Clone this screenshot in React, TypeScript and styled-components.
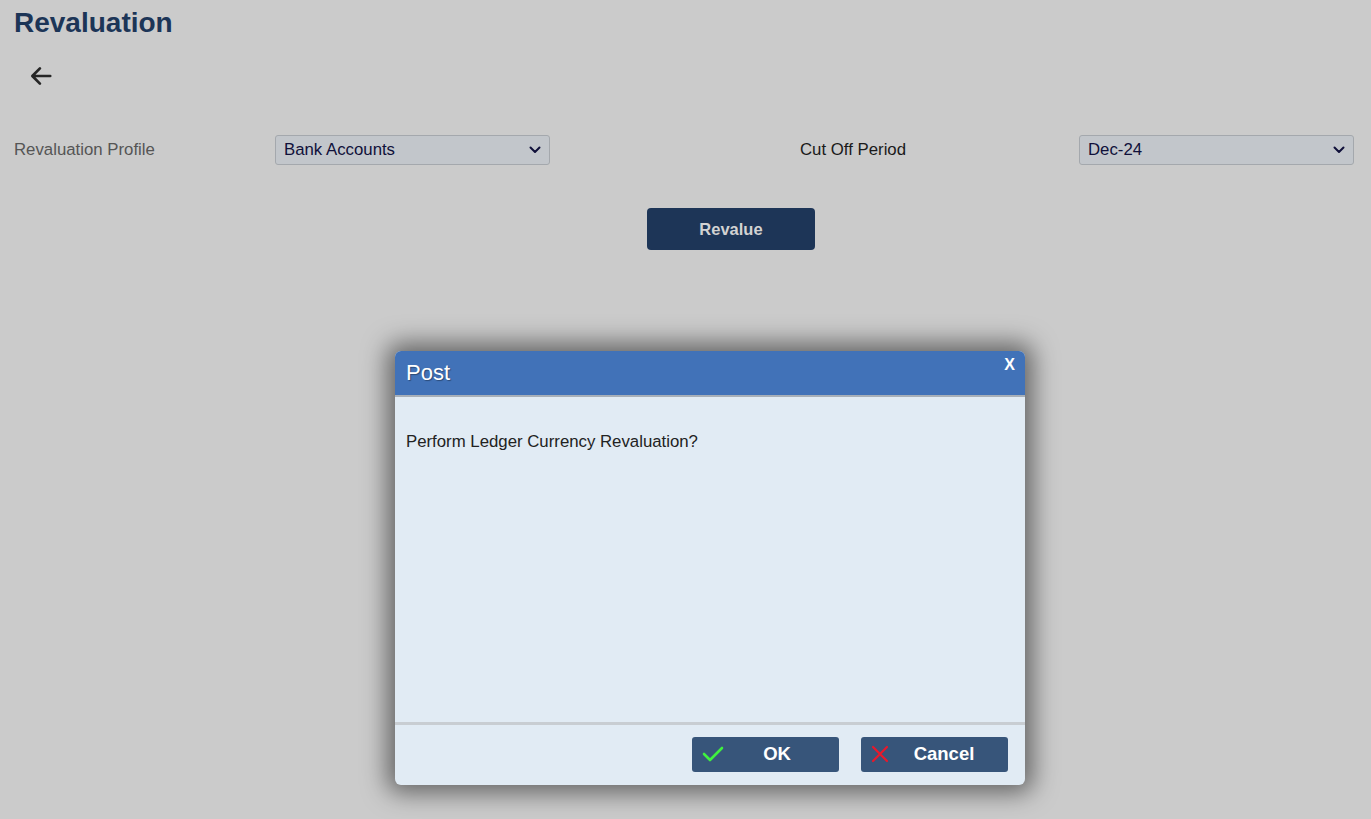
import React from "react";
import styled, { createGlobalStyle } from "styled-components";

const GlobalStyle = createGlobalStyle`
  html, body {
    margin: 0;
    padding: 0;
    background: #cbcbcb;
    font-family: "Liberation Sans", Arial, sans-serif;
  }
`;

const Page = styled.div`
  position: relative;
  width: 1371px;
  height: 819px;
  padding: 0 17px 0 14px;
  box-sizing: border-box;
  background: #cbcbcb;
  overflow: hidden;
`;

const Title = styled.h1`
  margin: 0;
  padding-top: 6px;
  font-size: 28px;
  line-height: 34px;
  font-weight: 700;
  color: #1c3557;
`;

const BackButton = styled.button`
  display: flex;
  align-items: center;
  justify-content: center;
  margin: 22px 0 0 13px;
  width: 28px;
  height: 28px;
  padding: 0;
  border: none;
  background: transparent;
  color: #262626;
  cursor: pointer;
`;

const FormRow = styled.div`
  display: grid;
  grid-template-columns: 261px 275px 1fr 275px;
  align-items: center;
  margin-top: 45px;
`;

const Label = styled.label<{ $indent?: number; $dark?: boolean }>`
  font-size: 16.8px;
  color: ${(p) => (p.$dark ? "#1a1a1a" : "#555555")};
  padding-left: ${(p) => p.$indent ?? 0}px;
`;

const SelectBox = styled.div`
  display: flex;
  align-items: center;
  justify-content: space-between;
  height: 30px;
  box-sizing: border-box;
  padding: 0 8px 1px 8px;
  background: #c2c6cb;
  border: 1px solid #a4a8ad;
  border-radius: 3px;
  font-size: 16.8px;
  color: #10103a;
`;

const ActionRow = styled.div`
  display: flex;
  margin-top: 43px;
  padding-left: 633px;
`;

const PrimaryButton = styled.button`
  width: 168px;
  height: 42px;
  border: none;
  border-radius: 4px;
  background: #1d3557;
  color: #d2d2d2;
  font-family: inherit;
  font-size: 16.5px;
  font-weight: 700;
  cursor: pointer;
`;

const Dialog = styled.div`
  position: absolute;
  left: 395px;
  top: 351px;
  width: 630px;
  height: 434px;
  display: flex;
  flex-direction: column;
  background: #e1ebf4;
  border-radius: 6px;
  overflow: hidden;
  box-shadow: 0 0 24px 8px rgba(0, 0, 0, 0.5);
`;

const DialogHeader = styled.div`
  position: relative;
  height: 46px;
  flex: none;
  display: flex;
  align-items: center;
  padding: 0 11px;
  background: #4172b8;
  border-bottom: 2px solid #a7afb8;
  box-sizing: border-box;
`;

const DialogTitle = styled.span`
  font-size: 22px;
  color: #ffffff;
  text-shadow: 1px 1px 1px rgba(0, 0, 0, 0.35);
`;

const CloseButton = styled.button`
  position: absolute;
  top: 5px;
  right: 10px;
  padding: 0;
  border: none;
  background: transparent;
  color: #ffffff;
  font-family: inherit;
  font-size: 16px;
  font-weight: 700;
  cursor: pointer;
`;

const DialogBody = styled.div`
  flex: 1;
  padding: 35px 11px 0;
  font-size: 16.8px;
  color: #222222;
`;

const DialogFooter = styled.div`
  flex: none;
  height: 63px;
  display: flex;
  align-items: center;
  justify-content: flex-end;
  gap: 22px;
  padding: 0 17px 2px 0;
  box-sizing: border-box;
  border-top: 3px solid #c8cdd2;
`;

const FooterButton = styled.button`
  position: relative;
  width: 147px;
  height: 35px;
  display: flex;
  align-items: center;
  padding: 0 0 0 10px;
  border: none;
  border-radius: 3px;
  background: #37557a;
  color: #ffffff;
  font-family: inherit;
  font-size: 18.5px;
  font-weight: 700;
  cursor: pointer;
`;

const ButtonText = styled.span`
  flex: 1;
  text-align: center;
  padding-right: 9px;
`;

const Chevron = () => (
  <svg width="12" height="8" viewBox="0 0 12 8" fill="none">
    <path d="M1.5 1.5 6 6l4.5-4.5" stroke="#10103a" strokeWidth="2" strokeLinecap="round" strokeLinejoin="round" />
  </svg>
);

const ArrowLeft = () => (
  <svg width="26" height="26" viewBox="0 0 24 24" fill="none">
    <path d="M20.5 12H4.5M11 5l-7 7 7 7" stroke="currentColor" strokeWidth="2.5" strokeLinecap="round" strokeLinejoin="round" />
  </svg>
);

const CheckIcon = () => (
  <svg width="22" height="18" viewBox="0 0 22 18" fill="none">
    <path d="M2 9l6 6L20 3" stroke="#3ff03f" strokeWidth="2.6" strokeLinecap="round" strokeLinejoin="round" />
  </svg>
);

const CrossIcon = () => (
  <svg width="18" height="18" viewBox="0 0 18 18" fill="none">
    <path d="M2 2l14 14M16 2 2 16" stroke="#e8192b" strokeWidth="2.2" strokeLinecap="round" />
  </svg>
);

const App = () => {
  return (
    <>
      <GlobalStyle />
      <Page>
        <Title>Revaluation</Title>
        <BackButton aria-label="Back">
          <ArrowLeft />
        </BackButton>

        <FormRow>
          <Label>Revaluation Profile</Label>
          <SelectBox>
            <span>Bank Accounts</span>
            <Chevron />
          </SelectBox>
          <Label $indent={250} $dark>
            Cut Off Period
          </Label>
          <SelectBox>
            <span>Dec-24</span>
            <Chevron />
          </SelectBox>
        </FormRow>

        <ActionRow>
          <PrimaryButton>Revalue</PrimaryButton>
        </ActionRow>

        <Dialog>
          <DialogHeader>
            <DialogTitle>Post</DialogTitle>
            <CloseButton>X</CloseButton>
          </DialogHeader>
          <DialogBody>Perform Ledger Currency Revaluation?</DialogBody>
          <DialogFooter>
            <FooterButton>
              <CheckIcon />
              <ButtonText>OK</ButtonText>
            </FooterButton>
            <FooterButton>
              <CrossIcon />
              <ButtonText>Cancel</ButtonText>
            </FooterButton>
          </DialogFooter>
        </Dialog>
      </Page>
    </>
  );
};

export default App;
